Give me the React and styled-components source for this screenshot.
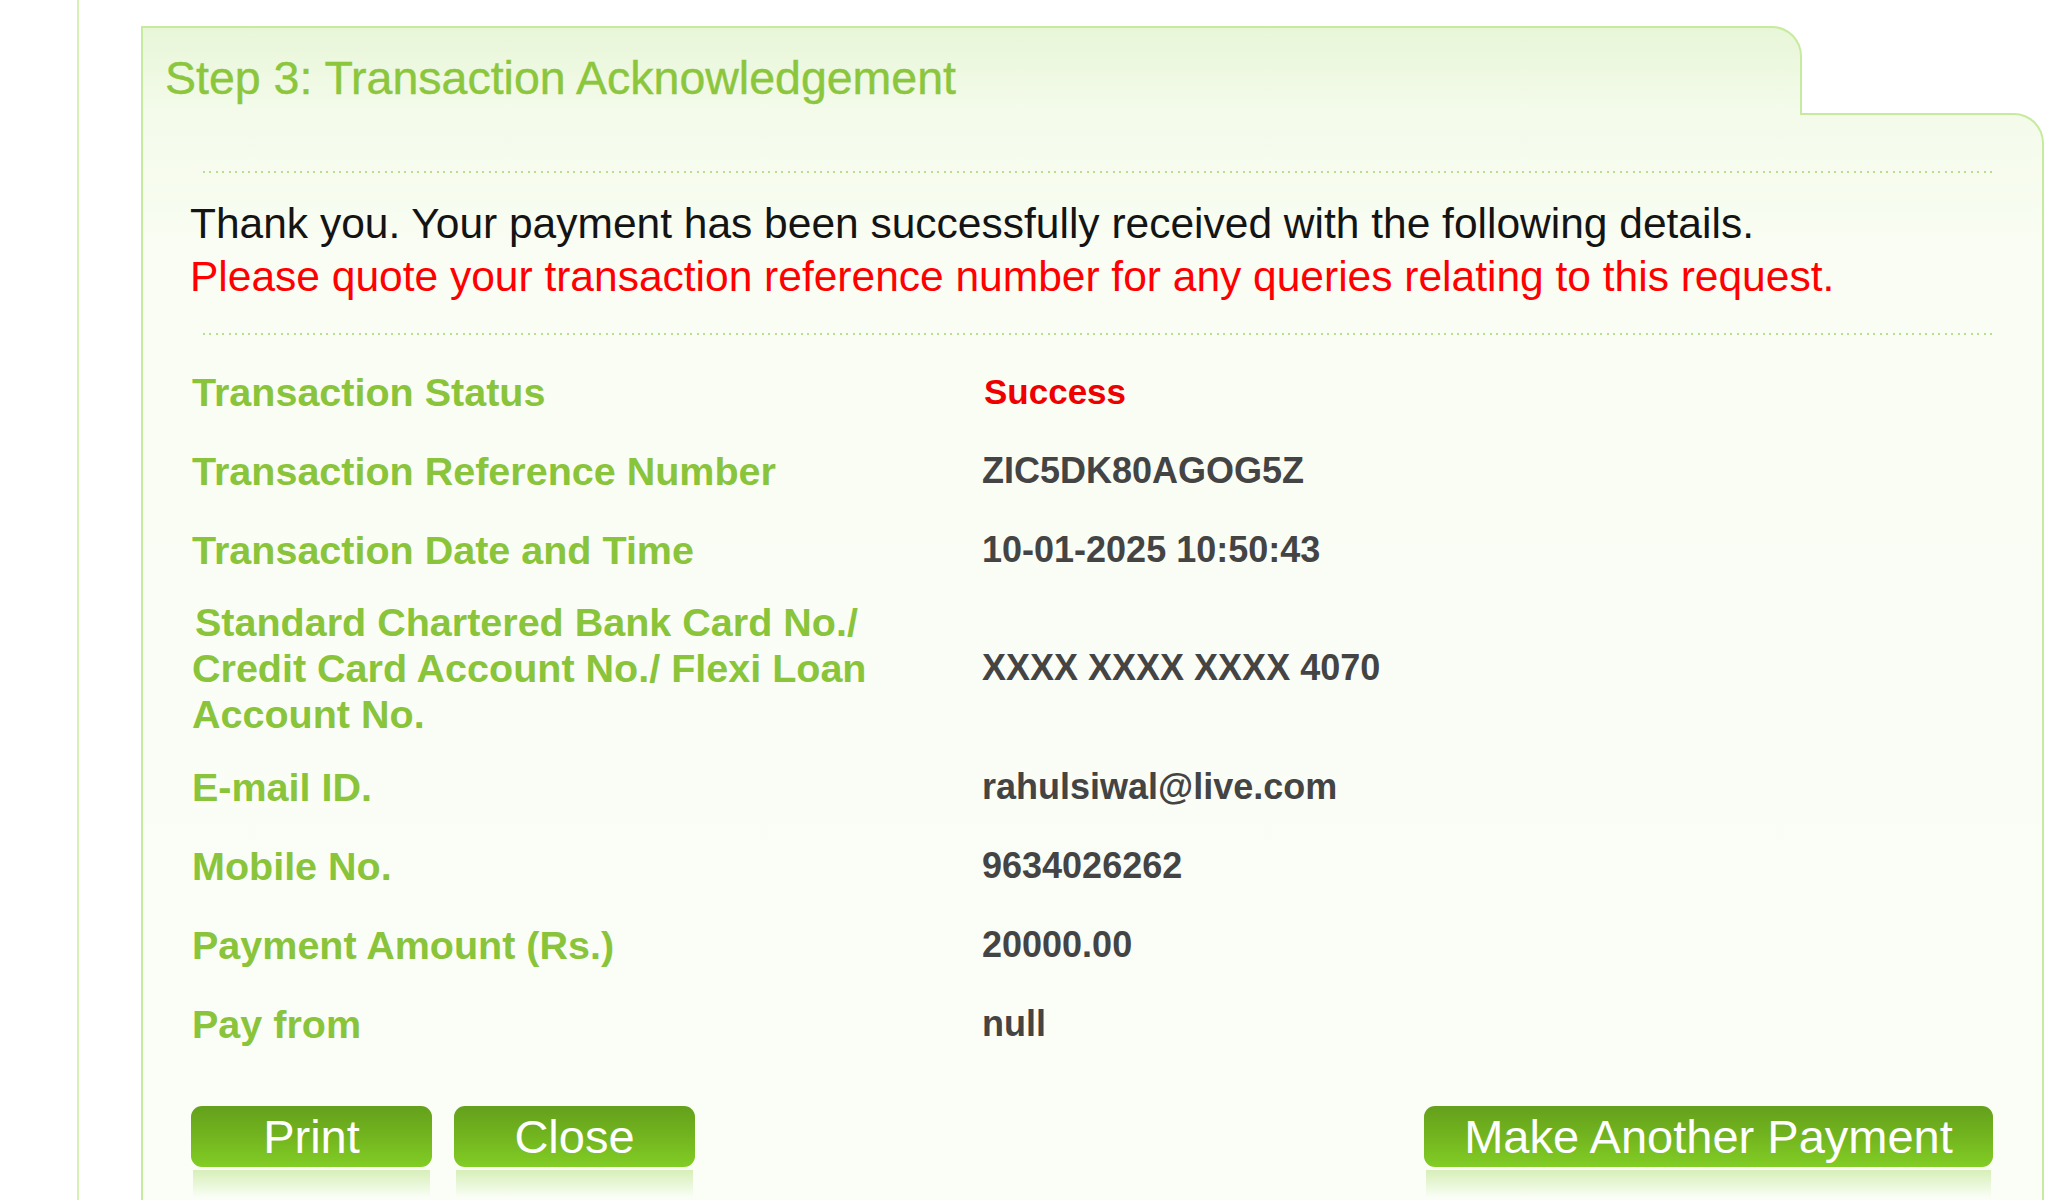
import styled, { createGlobalStyle } from 'styled-components';

const GlobalStyle = createGlobalStyle`
    body {
        margin: 0;
        background: #ffffff;
        font-family: 'Liberation Sans', Arial, sans-serif;
    }
`;

const Page = styled.div`
    margin-left: 77px;
    padding: 26px 0 0 62px;
    min-height: 100vh;
    border-left: 2px solid #d6f0b8;
    box-sizing: border-box;
`;

const Panel = styled.div`
    width: 1903px;
    display: flex;
    flex-direction: column;
`;

const Tab = styled.div`
    position: relative;
    z-index: 1;
    align-self: flex-start;
    width: 1661px;
    height: 89px;
    margin-bottom: -2px;
    padding: 27px 0 0 22px;
    box-sizing: border-box;
    border: 2px solid #c6eb9e;
    border-bottom: none;
    border-top-right-radius: 30px;
    background: linear-gradient(#e8f6d8, #f4fbeb);
`;

const Title = styled.h1`
    margin: 0;
    font-size: 46.5px;
    line-height: 46px;
    font-weight: 400;
    color: #8bc63c;
    -webkit-text-stroke: 0.4px #8bc63c;
`;

const Body = styled.div`
    border: 2px solid #c6eb9e;
    border-bottom: none;
    border-top-right-radius: 30px;
    background: linear-gradient(#f4fbeb, #fafdf4 160px, #fbfef7);
    padding-bottom: 40px;
`;

const Divider = styled.div`
    height: 2px;
    margin: ${(p) => p.$top}px 49px 0 60px;
    background: repeating-linear-gradient(
        to right,
        #b7e08c 0 2px,
        transparent 2px 6.5px
    );
`;

const Message = styled.div`
    margin: 24px 0 30px 47px;
    font-size: 42.5px;
    line-height: 53px;
`;

const Line = styled.div`
    color: ${(p) => (p.$alert ? '#ff0000' : '#141414')};
    white-space: nowrap;
`;

const Details = styled.div`
    margin: 17px 0 0 49px;
    display: flex;
    flex-direction: column;
`;

const Row = styled.div`
    display: grid;
    grid-template-columns: 790px 1fr;
    align-items: center;
    min-height: 79px;
    padding: 10px 0;
    box-sizing: border-box;
`;

const Label = styled.div`
    font-size: 39.5px;
    line-height: 46px;
    font-weight: 700;
    color: #89c43b;
`;

const Indent = styled.span`
    padding-left: 3px;
`;

const Value = styled.div`
    font-size: ${(p) => (p.$status ? '35px' : '36px')};
    font-weight: 700;
    color: ${(p) => (p.$status ? '#ee0000' : '#444444')};
    padding-left: ${(p) => (p.$status ? '2px' : '0')};
`;

const Actions = styled.div`
    margin: 43px 49px 0 48px;
    display: flex;
    align-items: flex-start;
    gap: 22px;
`;

const Spacer = styled.div`
    flex: 1;
`;

const ButtonStack = styled.div`
    display: flex;
    flex-direction: column;
    width: ${(p) => p.$width}px;
`;

const Button = styled.button`
    height: 61px;
    border: none;
    border-radius: 11px;
    background: linear-gradient(#64a01c, #74b71f 55%, #82cd25);
    color: #ffffff;
    font-family: 'Liberation Sans', Arial, sans-serif;
    font-size: 47px;
    line-height: 61px;
    padding: 0;
    cursor: pointer;
`;

const Reflection = styled.div`
    height: 28px;
    margin: 3px 2px 0;
    background: linear-gradient(#d6efb8, rgba(250, 253, 244, 0));
`;

const rows = [
    { label: 'Transaction Status', value: 'Success', status: true },
    { label: 'Transaction Reference Number', value: 'ZIC5DK80AGOG5Z' },
    { label: 'Transaction Date and Time', value: '10-01-2025 10:50:43' },
    {
        label: (
            <>
                <Indent>Standard Chartered Bank Card No./</Indent>
                <br />
                Credit Card Account No./ Flexi Loan
                <br />
                Account No.
            </>
        ),
        value: 'XXXX XXXX XXXX 4070',
    },
    { label: 'E-mail ID.', value: 'rahulsiwal@live.com' },
    { label: 'Mobile No.', value: '9634026262' },
    { label: 'Payment Amount (Rs.)', value: '20000.00' },
    { label: 'Pay from', value: 'null' },
];

const App = () => {
    return (
        <>
            <GlobalStyle />
            <Page>
                <Panel>
                    <Tab>
                        <Title>Step 3: Transaction Acknowledgement</Title>
                    </Tab>
                    <Body>
                        <Divider $top={56} />
                        <Message>
                            <Line>
                                Thank you. Your payment has been successfully received with the following details.
                            </Line>
                            <Line $alert>
                                Please quote your transaction reference number for any queries relating to this request.
                            </Line>
                        </Message>
                        <Divider $top={0} />
                        <Details>
                            {rows.map((row, i) => (
                                <Row key={i}>
                                    <Label>{row.label}</Label>
                                    <Value $status={row.status}>{row.value}</Value>
                                </Row>
                            ))}
                        </Details>
                        <Actions>
                            <ButtonStack $width={241}>
                                <Button>Print</Button>
                                <Reflection />
                            </ButtonStack>
                            <ButtonStack $width={241}>
                                <Button>Close</Button>
                                <Reflection />
                            </ButtonStack>
                            <Spacer />
                            <ButtonStack $width={569}>
                                <Button>Make Another Payment</Button>
                                <Reflection />
                            </ButtonStack>
                        </Actions>
                    </Body>
                </Panel>
            </Page>
        </>
    );
};

export default App;
